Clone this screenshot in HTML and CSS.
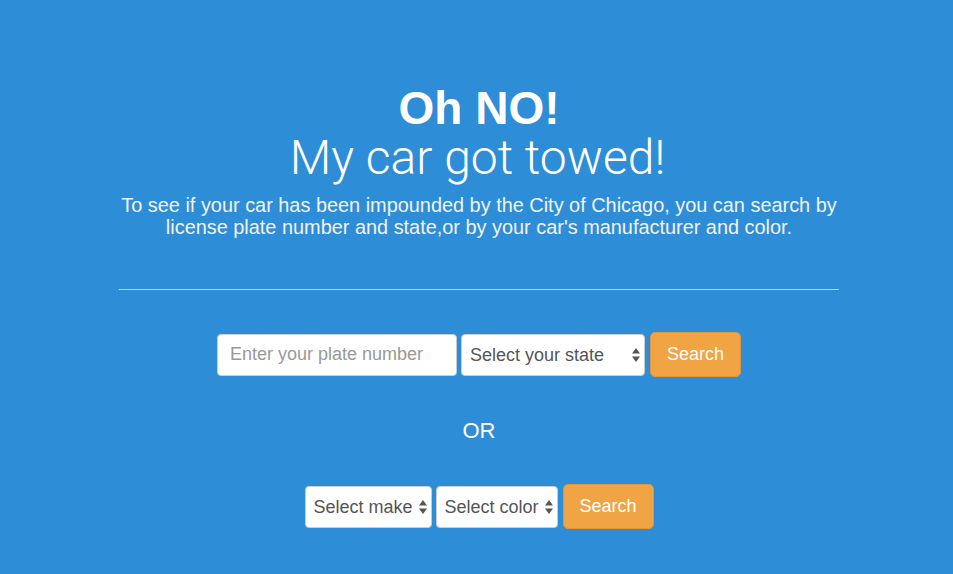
FILE: index.html
```html
<!DOCTYPE html>
<html>
<head>
<meta charset="utf-8">
<link rel="stylesheet" href="styles.css">
</head>
<body>
<div class="page">
  <div class="container">
    <h1 class="title">Oh NO!</h1>
    <h2 class="subtitle">My car got towed!</h2>
    <p class="intro">To see if your car has been impounded by the City of Chicago, you can search by license plate number and state,or by your car's manufacturer and color.</p>
    <hr class="rule">
    <form class="row row-plate">
      <input class="field field-plate" type="text" placeholder="Enter your plate number">
      <span class="select-wrap sel-state">
        <select class="field select"><option>Select your state</option></select>
        <svg class="arrows" width="8" height="14" viewBox="0 0 8 14"><path d="M4 0 L8 5.5 L0 5.5 Z M4 14 L8 8.5 L0 8.5 Z" fill="#555"/></svg>
      </span>
      <button class="btn" type="button">Search</button>
    </form>
    <div class="or">OR</div>
    <form class="row row-make">
      <span class="select-wrap sel-make">
        <select class="field select"><option>Select make</option></select>
        <svg class="arrows" width="8" height="14" viewBox="0 0 8 14"><path d="M4 0 L8 5.5 L0 5.5 Z M4 14 L8 8.5 L0 8.5 Z" fill="#555"/></svg>
      </span>
      <span class="select-wrap sel-color">
        <select class="field select"><option>Select color</option></select>
        <svg class="arrows" width="8" height="14" viewBox="0 0 8 14"><path d="M4 0 L8 5.5 L0 5.5 Z M4 14 L8 8.5 L0 8.5 Z" fill="#555"/></svg>
      </span>
      <button class="btn" type="button">Search</button>
    </form>
  </div>
</div>
</body>
</html>
```
FILE: styles.css
```css
html, body {
  margin: 0;
  padding: 0;
  background: #2e8dd7;
}
body {
  font-family: "Liberation Sans", Arial, sans-serif;
  color: #fff;
  height: 574px;
  overflow: hidden;
}
.page {
  padding-left: 5px;
}
.container {
  width: 720px;
  margin: 0 auto;
  text-align: center;
  padding-top: 84px;
}
.title {
  margin: 0;
  font-size: 46px;
  font-weight: bold;
  line-height: 48px;
}
.subtitle {
  margin: 0;
  font-family: Roboto, "Liberation Sans", sans-serif;
  font-weight: 300;
  font-size: 48px;
  line-height: 52px;
  padding-right: 3px;
}
.intro {
  margin: 10px -12px 0;
  font-size: 19.9px;
  line-height: 22px;
  color: #f2f2f2;
}
.rule {
  margin: 51px 0 0;
  border: 0;
  border-top: 1px solid #d2d0cc;
  height: 0;
}
.row {
  display: flex;
  justify-content: center;
  align-items: center;
  gap: 4px;
  margin: 0;
}
.row-plate {
  margin-top: 42px;
}
.field {
  box-sizing: border-box;
  height: 42px;
  border: 1px solid #ccc;
  border-radius: 4px;
  background: #fff;
  font-family: "Liberation Sans", Arial, sans-serif;
  font-size: 18px;
  color: #555;
  padding: 0 12px;
  margin: 0;
  outline: none;
}
.field-plate {
  width: 240px;
}
.field-plate::placeholder {
  color: #999;
}
.select-wrap {
  position: relative;
  display: inline-block;
}
.select {
  appearance: none;
  -webkit-appearance: none;
  width: 100%;
  padding: 0 8px;
}
.arrows {
  position: absolute;
  right: 5px;
  top: 14px;
  pointer-events: none;
}
.sel-state { width: 184px; }
.sel-make { width: 127px; }
.sel-color { width: 122px; }
.btn {
  box-sizing: border-box;
  width: 91px;
  height: 45px;
  border: 1px solid #e0953a;
  border-radius: 5px;
  background: #f0a444;
  color: #fff;
  font-family: "Liberation Sans", Arial, sans-serif;
  font-size: 18px;
  margin-left: 1px;
  padding: 0;
}
.or {
  margin-top: 41px;
  font-size: 22px;
  line-height: 26px;
}
.row-make {
  margin-top: 40px;
}
```
